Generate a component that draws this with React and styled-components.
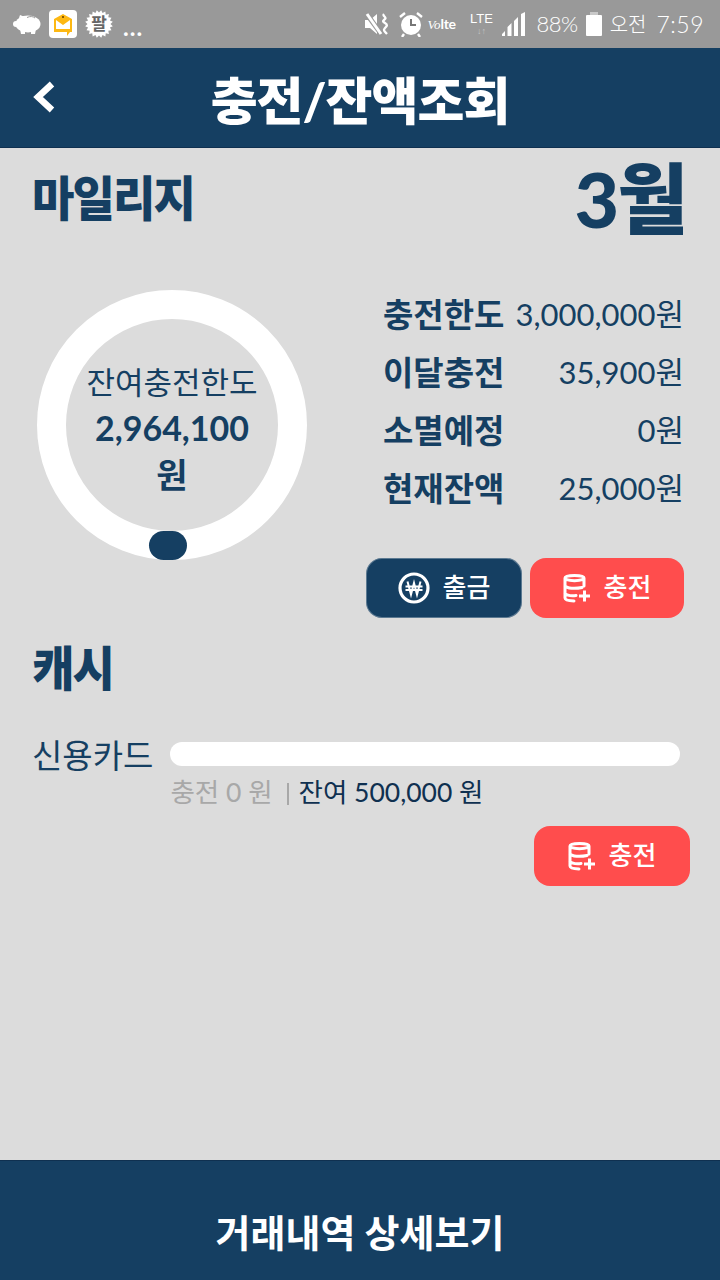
import styled, { createGlobalStyle } from 'styled-components';

const NAVY = '#153f62';
const RED = '#ff4d4d';
const FONT = `Lato, "Noto Sans CJK KR", sans-serif`;

const GlobalStyle = createGlobalStyle`
    html, body { margin: 0; padding: 0; background: #dcdcdc; }
    * { box-sizing: border-box; }
    body { font-family: ${FONT}; }
`;

const Page = styled.div`
    width: 720px;
    height: 1280px;
    display: flex;
    flex-direction: column;
    overflow: hidden;
    background: #dcdcdc;
    color: ${NAVY};
`;

const StatusBar = styled.div`
    height: 48px;
    flex: none;
    background: #999999;
    display: flex;
    align-items: center;
    justify-content: space-between;
    padding: 0 16px 0 13px;
    color: #fff;
`;

const StatusGroup = styled.div`
    display: flex;
    align-items: center;
    gap: 8px;
`;

const StatusSlot = styled.span`
    display: flex;
    align-items: center;
    margin-left: ${(props) => props.$left || 0}px;
`;

const StatusText = styled.span`
    font-size: ${(props) => props.$size || 22}px;
    font-weight: 300;
    line-height: 1;
    letter-spacing: ${(props) => props.$spacing || 0}px;
    margin-left: ${(props) => props.$left || 0}px;
`;

const Dots = styled.span`
    font-size: 24px;
    font-weight: 700;
    line-height: 1;
    letter-spacing: 1px;
    margin: 5px 0 0 2px;
`;

const VolteText = styled.div`
    width: 32px;
    display: flex;
    align-items: baseline;
    white-space: nowrap;
    i { font: italic 400 13px/1 "Liberation Serif", serif; }
    b { font: 700 14px/1 Lato, sans-serif; letter-spacing: -0.3px; }
`;

const LteBox = styled.div`
    width: 26px;
    display: flex;
    flex-direction: column;
    align-items: center;
    font: 400 13px/14px "Liberation Sans", sans-serif;
    span:last-child { font-size: 9px; line-height: 10px; font-weight: 700; color: #c4c4c4; }
`;

const Header = styled.header`
    height: 100px;
    flex: none;
    background: ${NAVY};
    border-bottom: 1px solid #0f3050;
    display: flex;
    align-items: center;
    justify-content: center;
    position: relative;
`;

const BackButton = styled.button`
    position: absolute;
    left: 32px;
    top: 33px;
    padding: 0;
    border: 0;
    background: none;
    display: flex;
`;

const HeaderTitle = styled.h1`
    margin: 0;
    color: #fff;
    font-size: 51px;
    font-weight: 900;
    line-height: 1;
    letter-spacing: -1px;
    transform: translateY(3px);
`;

const Content = styled.main`
    flex: 1;
    display: flex;
    flex-direction: column;
`;

const TopRow = styled.div`
    display: flex;
    justify-content: space-between;
    align-items: flex-start;
    height: 141px;
    padding: 0 34px 0 32px;
`;

const SectionTitle = styled.h2`
    margin: ${(props) => props.$top || 0}px 0 0 ${(props) => props.$left || 0}px;
    font-size: 48px;
    font-weight: 900;
    line-height: 1;
    letter-spacing: -2px;
    transform: scaleX(0.96);
    transform-origin: left top;
`;

const MonthText = styled.div`
    margin-top: 12px;
    font-size: 77px;
    font-weight: 900;
    line-height: 1;
    letter-spacing: -2px;
`;

const UsageRow = styled.div`
    display: flex;
    justify-content: space-between;
    padding: 0 37px;
`;

const Ring = styled.div`
    width: 270px;
    height: 270px;
    margin-top: 1px;
    border: 29px solid #fff;
    border-radius: 50%;
    position: relative;
    display: flex;
    flex-direction: column;
    align-items: center;
    padding: 42px 0 0;
`;

const RingDot = styled.div`
    position: absolute;
    left: 83px;
    bottom: -29px;
    width: 38px;
    height: 29px;
    background: ${NAVY};
    border-radius: 15px;
`;

const RingLabel = styled.div`
    font-size: 31px;
    font-weight: 400;
    line-height: 43px;
    white-space: nowrap;
`;

const RingValue = styled.div`
    font-size: 34px;
    font-weight: 700;
    line-height: 47px;
    text-align: center;
`;

const StatList = styled.dl`
    margin: 3px -1px 0 0;
    width: 301px;
    display: flex;
    flex-direction: column;
    gap: 14px;
`;

const StatRow = styled.div`
    height: 44px;
    display: flex;
    align-items: center;
    justify-content: space-between;
`;

const StatLabel = styled.dt`
    font-size: 33px;
    font-weight: 700;
    line-height: 1;
    white-space: nowrap;
`;

const StatValue = styled.dd`
    margin: 0;
    font-size: 31px;
    font-weight: 400;
    line-height: 1;
    white-space: nowrap;
`;

const ActionRow = styled.div`
    display: flex;
    justify-content: flex-end;
    gap: 8px;
    margin-top: ${(props) => props.$top || 0}px;
    padding-right: ${(props) => props.$right || 0}px;
`;

const ActionButton = styled.button`
    width: ${(props) => props.$width || 156}px;
    height: 60px;
    padding: 0 0 5px;
    border: 0;
    border-radius: 16px;
    background: ${(props) => props.$navy ? NAVY : RED};
    box-shadow: ${(props) => props.$navy ? 'inset 0 0 0 1px rgba(255, 255, 255, 0.3)' : 'none'};
    color: #fff;
    font-family: ${FONT};
    font-size: 26px;
    font-weight: 500;
    display: flex;
    align-items: center;
    justify-content: center;
    gap: 13px;

    svg { margin-top: 4px; }
`;

const CardRow = styled.div`
    display: flex;
    align-items: flex-start;
    gap: 17px;
    margin-top: 50px;
    padding: 0 40px 0 32px;
`;

const CardName = styled.div`
    font-size: 33px;
    font-weight: 400;
    line-height: 40px;
    margin-top: -7px;
    white-space: nowrap;
`;

const CardBody = styled.div`
    flex: 1;
    display: flex;
    flex-direction: column;
`;

const CardBar = styled.div`
    height: 24px;
    background: #fff;
    border-radius: 12px;
`;

const CardInfo = styled.div`
    margin-top: 8px;
    display: flex;
    align-items: center;
    font-size: 26.5px;
    line-height: 36px;
    color: #0f3050;
    white-space: nowrap;
`;

const Muted = styled.span`
    color: #a8a8a8;
`;

const Divider = styled.span`
    width: 2px;
    height: 22px;
    margin: 3px 10px 0 14px;
    background: #a8a8a8;
`;

const Footer = styled.footer`
    height: 120px;
    flex: none;
    background: ${NAVY};
    border-top: 1px solid #0f3050;
    display: flex;
    align-items: center;
    justify-content: center;
    padding-top: 20px;
    color: #fff;
    font-size: 38px;
    font-weight: 700;
`;

const Pig = () => (
    <svg width="28" height="24" viewBox="0 0 28 24" fill="#fff">
        <ellipse cx="15" cy="12" rx="12.500" ry="8.500" />
        <ellipse cx="3" cy="12" rx="3" ry="3" />
        <path d="M6 6l1-3 5 2zM7 17h5v5H8zM18 17h5l-1 5h-4z" />
        <path d="M14 5.500c3-1.500 6-1.200 8 .5" fill="none" stroke="#999" strokeWidth="1" />
    </svg>
);

const MailBadge = () => (
    <svg width="28" height="28" viewBox="0 0 28 28">
        <rect width="28" height="28" rx="4" fill="#fff" />
        <path d="M5 9l9-5 9 5v13h-2l-3 4v-4H5z" fill="#fdb813" />
        <path d="M7 10l7 5 7-5v9H7z" fill="#fff" />
        <path d="M13 6h2v2h-2z" fill="#8a5a00" />
    </svg>
);

const StampBadge = () => {
    const points = [];
    for (let i = 0; i < 40; i++) {
        const r = i % 2 ? 14 : 11.500;
        const a = (i * Math.PI) / 20;
        points.push(`${14 + r * Math.cos(a)},${14 + r * Math.sin(a)}`);
    }
    return (
        <svg width="28" height="28" viewBox="0 0 28 28">
            <polygon points={points.join(' ')} fill="#fff" />
            <text x="14" y="20" textAnchor="middle" fontSize="17" fontWeight="700" fontFamily="Noto Sans CJK KR" fill="#666">팔</text>
        </svg>
    );
};

const MuteIcon = () => (
    <svg width="26" height="26" viewBox="0 0 26 26" fill="none">
        <path d="M0 9h5l7-6v20l-7-6H0z" fill="#fff" />
        <path d="M1 2l16 22" stroke="#999" strokeWidth="5" />
        <path d="M2 3l14 20" stroke="#fff" strokeWidth="3" />
        <path d="M19 3c-2 2 3 3 1 5s-3 2 0 4 2 3 0 5-1 3 2 6" stroke="#fff" strokeWidth="2.400" />
    </svg>
);

const AlarmIcon = () => (
    <svg width="24" height="26" viewBox="0 0 24 26" fill="none">
        <circle cx="12" cy="14" r="10" fill="#fff" />
        <path d="M12 8v6h5" stroke="#777" strokeWidth="2" />
        <path d="M1 6l5-4M23 6l-5-4M5 23l-2 3M19 23l2 3" stroke="#fff" strokeWidth="2.400" />
    </svg>
);

const SignalIcon = () => (
    <svg width="24" height="24" viewBox="0 0 24 24" fill="#fff">
        <path d="M0 24v-2l3-3v5zM5.500 24v-9l4-4v13zM12 24V9l4-4v19zM19 24V2l4-2v24z" />
    </svg>
);

const BatteryIcon = () => (
    <svg width="16" height="24" viewBox="0 0 16 24" fill="#fff">
        <rect x="4" y="0" width="8" height="3" fill="#c8c8c8" />
        <rect x="0" y="3" width="16" height="21" rx="1" />
    </svg>
);

const BackIcon = () => (
    <svg width="24" height="32" viewBox="0 0 24 32" fill="none">
        <path d="M20 3L6 16l14 13" stroke="#fff" strokeWidth="6.500" strokeLinejoin="miter" />
    </svg>
);

const WonIcon = () => (
    <svg width="32" height="32" viewBox="0 0 32 32" fill="none" stroke="#fff">
        <circle cx="16" cy="16" r="14" strokeWidth="3.200" />
        <path d="M9.500 9.500l3.500 13 3-11.500 3 11.500 3.500-13M7.500 14.500h17M7.500 18h17" strokeWidth="2" />
    </svg>
);

const ChargeIcon = () => (
    <svg width="28" height="30" viewBox="0 0 28 30" fill="none" stroke="#fff" strokeWidth="3" strokeLinecap="round">
        <path d="M2 5C2 1.500 21 1.500 21 5S2 8.500 2 5zM2 5v20c0 1.800 3 2.800 9 3M21 5v8M2 13c2 2.500 10 3 17 1.500M2 20.500c2 2 6 2.500 11 2" />
        <path d="M21.500 17.500v11M16 23h11" strokeLinecap="butt" />
    </svg>
);

const stats = [
    { label: '충전한도', value: '3,000,000원' },
    { label: '이달충전', value: '35,900원' },
    { label: '소멸예정', value: '0원' },
    { label: '현재잔액', value: '25,000원' },
];

const App = () => {
    return (
        <>
            <GlobalStyle />
            <Page>
                <StatusBar>
                    <StatusGroup>
                        <Pig />
                        <MailBadge />
                        <StampBadge />
                        <Dots>...</Dots>
                    </StatusGroup>
                    <StatusGroup>
                        <MuteIcon />
                        <StatusSlot><AlarmIcon /></StatusSlot>
                        <StatusSlot $left={-4}><VolteText><i>Vo</i><b>lte</b></VolteText></StatusSlot>
                        <StatusSlot $left={1}><LteBox><span>LTE</span><span>↓↑</span></LteBox></StatusSlot>
                        <SignalIcon />
                        <StatusText $left={2} $spacing={-0.5}>88%</StatusText>
                        <BatteryIcon />
                        <StatusText $size={20}>오전</StatusText>
                        <StatusText $left={2} $size={23} $spacing={0.5}>7:59</StatusText>
                    </StatusGroup>
                </StatusBar>
                <Header>
                    <BackButton aria-label="뒤로"><BackIcon /></BackButton>
                    <HeaderTitle>충전/잔액조회</HeaderTitle>
                </Header>
                <Content>
                    <TopRow>
                        <SectionTitle $top={26}>마일리지</SectionTitle>
                        <MonthText>3월</MonthText>
                    </TopRow>
                    <UsageRow>
                        <Ring>
                            <RingLabel>잔여충전한도</RingLabel>
                            <RingValue>2,964,100<br />원</RingValue>
                            <RingDot />
                        </Ring>
                        <StatList>
                            {stats.map((item) => (
                                <StatRow key={item.label}>
                                    <StatLabel>{item.label}</StatLabel>
                                    <StatValue>{item.value}</StatValue>
                                </StatRow>
                            ))}
                        </StatList>
                    </UsageRow>
                    <ActionRow $top={-2} $right={36}>
                        <ActionButton $navy><WonIcon />출금</ActionButton>
                        <ActionButton $width={154}><ChargeIcon />충전</ActionButton>
                    </ActionRow>
                    <SectionTitle $top={26} $left={32}>캐시</SectionTitle>
                    <CardRow>
                        <CardName>신용카드</CardName>
                        <CardBody>
                            <CardBar />
                            <CardInfo>
                                <Muted>충전 0 원</Muted>
                                <Divider />
                                잔여 500,000 원
                            </CardInfo>
                        </CardBody>
                    </CardRow>
                    <ActionRow $top={16} $right={30}>
                        <ActionButton><ChargeIcon />충전</ActionButton>
                    </ActionRow>
                </Content>
                <Footer>거래내역 상세보기</Footer>
            </Page>
        </>
    );
};

export default App;
